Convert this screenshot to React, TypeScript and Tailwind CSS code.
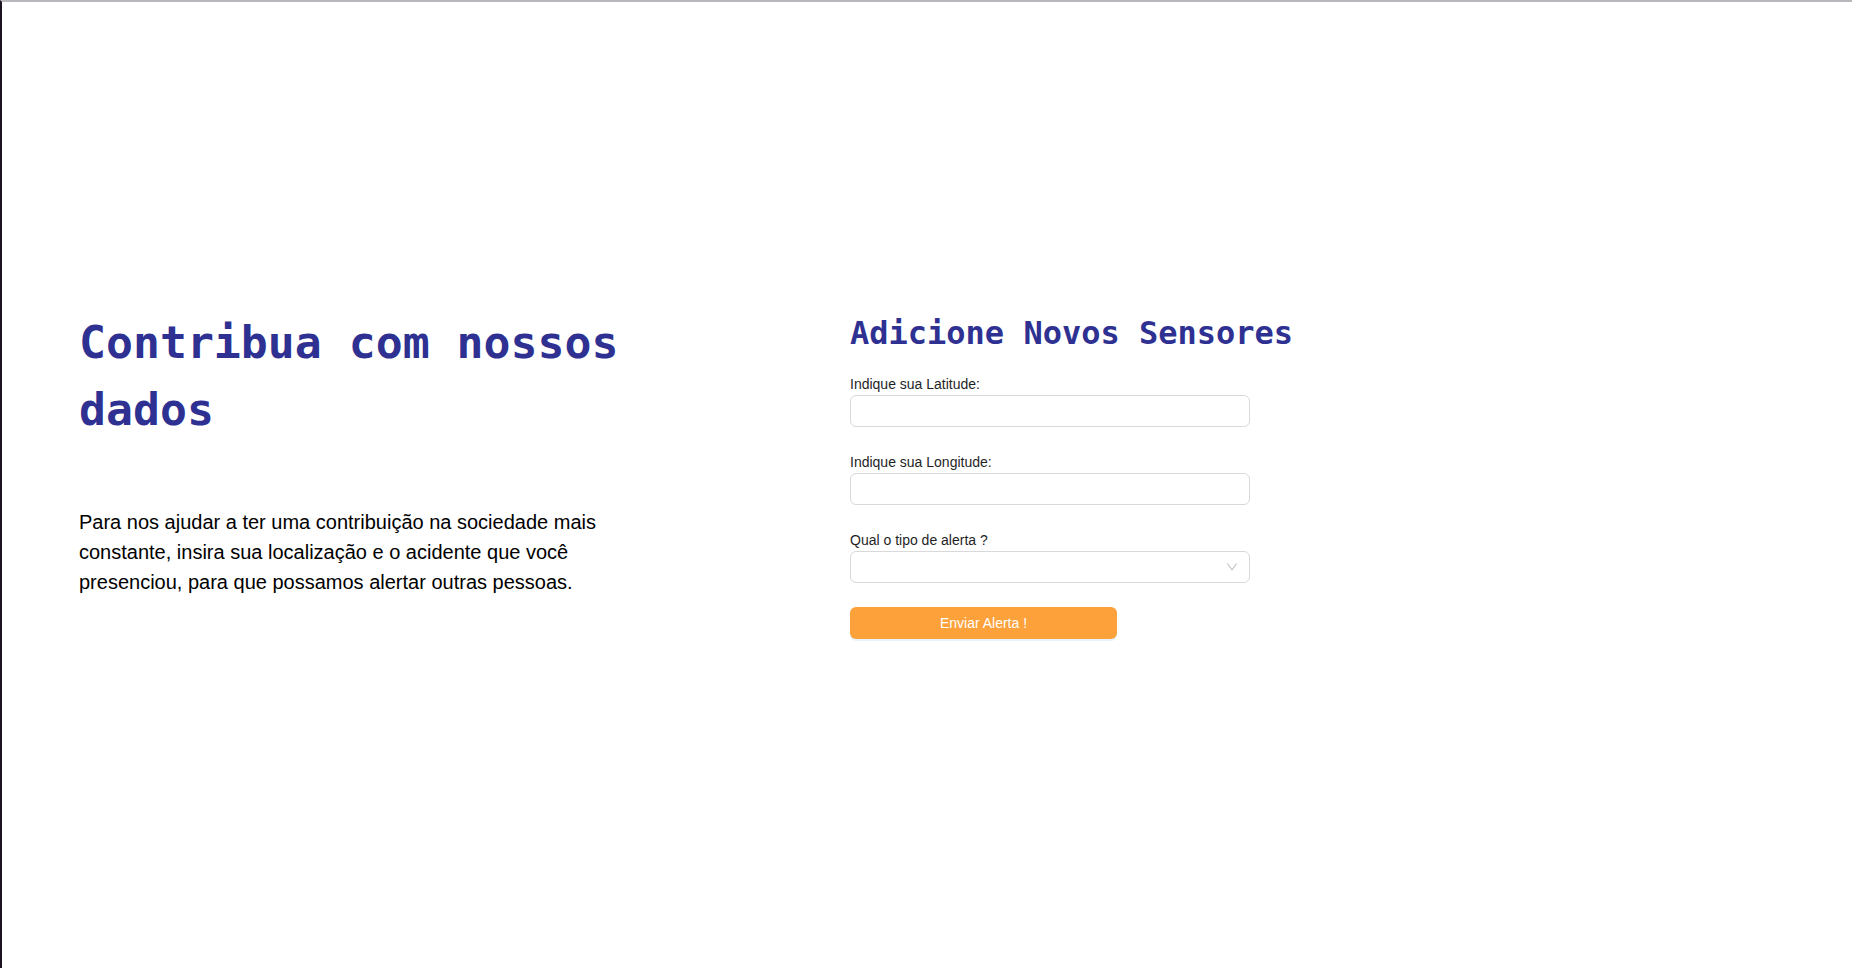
function Field(props: { label: string; children: React.ReactNode }) {
  return (
    <div className="mb-6 flex flex-col">
      <label className="text-[14px] leading-[22px] text-[#1f1f1f]">{props.label}</label>
      {props.children}
    </div>
  );
}

function ChevronDown() {
  return (
    <svg viewBox="64 64 896 896" width="12" height="12" fill="currentColor" aria-hidden="true">
      <path d="M884 256h-75c-5.1 0-9.9 2.5-12.9 6.6L512 654.2 227.9 262.6c-3-4.1-7.8-6.6-12.9-6.6h-75c-6.5 0-10.3 7.4-6.5 12.7l352.6 486.1c12.8 17.6 39 17.6 51.7 0l352.6-486.1c3.9-5.3.1-12.7-6.4-12.7z" />
    </svg>
  );
}

export default function App() {
  const mono = { fontFamily: '"DejaVu Sans Mono", monospace' };
  return (
    <div
      className="flex h-screen w-full items-start border-l-2 border-t-2 border-l-[#1b1320] border-t-[#bab8bd] bg-white pt-[307px]"
      style={{ fontFamily: '"Liberation Sans", Arial, sans-serif' }}
    >
      <section className="w-[848px] shrink-0 pl-[77px]">
        <div className="max-w-[580px]">
          <h1 className="text-[44.8px] font-bold leading-[1.5] text-[#2e3192]" style={mono}>
            Contribua com nossos dados
          </h1>
          <p className="mt-16 text-[20px] leading-[30px] text-black">
            Para nos ajudar a ter uma contribuição na sociedade mais constante, insira sua localização e o
            acidente que você presenciou, para que possamos alertar outras pessoas.
          </p>
        </div>
      </section>

      <section className="flex flex-col">
        <h2 className="text-[32px] font-bold leading-[48px] text-[#2e3192]" style={mono}>
          Adicione Novos Sensores
        </h2>
        <form className="mt-4 flex flex-col" onSubmit={(e) => e.preventDefault()}>
          <Field label="Indique sua Latitude:">
            <input className="h-8 w-[400px] rounded-md border border-[#d9d9d9] px-[11px] text-[14px] outline-none" />
          </Field>
          <Field label="Indique sua Longitude:">
            <input className="h-8 w-[400px] rounded-md border border-[#d9d9d9] px-[11px] text-[14px] outline-none" />
          </Field>
          <Field label="Qual o tipo de alerta ?">
            <div className="flex h-8 w-[400px] items-center justify-end rounded-md border border-[#d9d9d9] px-[11px] text-[#00000040]">
              <ChevronDown />
            </div>
          </Field>
          <button
            type="submit"
            className="h-8 w-[267px] rounded-md bg-[#fda13a] text-[14px] text-white shadow-[0_2px_0_rgba(5,145,255,0.1)]"
          >
            Enviar Alerta !
          </button>
        </form>
      </section>
    </div>
  );
}
